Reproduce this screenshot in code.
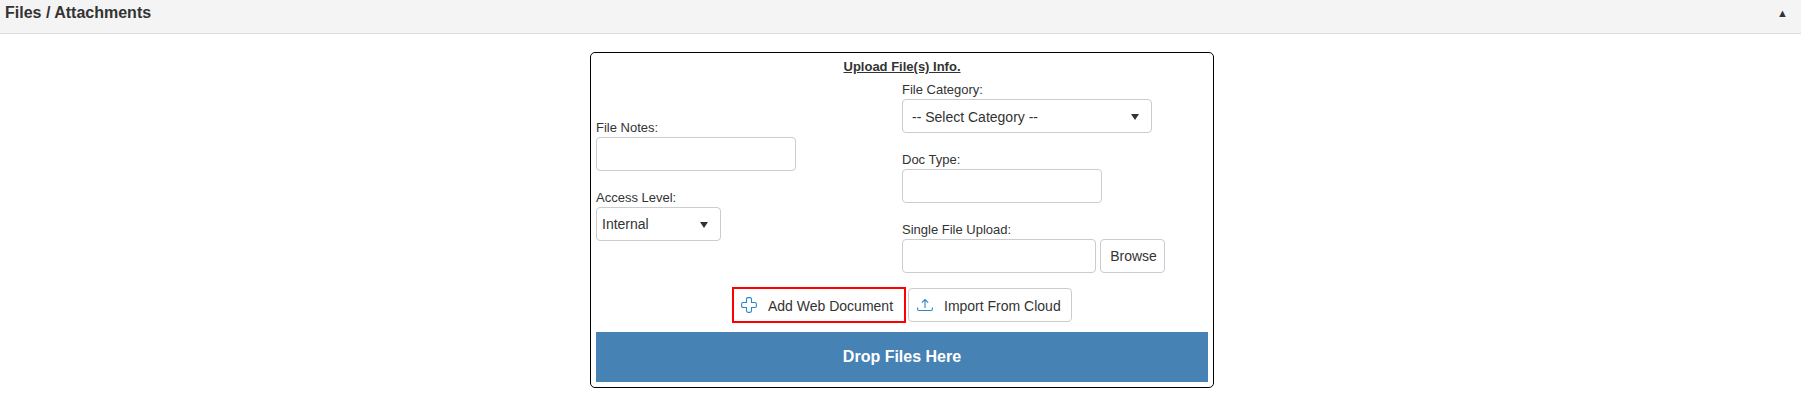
<section class="panel">
  <header class="bar">
    <h2>Files / Attachments</h2>
    <span class="toggle">▲</span>
  </header>
  <div class="body">
    <form class="box">
      <div class="title">Upload File(s) Info.</div>
      <div class="cols">
        <div class="col left">
          <div class="field">
            <label for="notes">File Notes:</label>
            <input id="notes" class="w200" type="text" />
          </div>
          <div class="field">
            <label for="access">Access Level:</label>
            <select id="access" class="w125 short">
              <option>Internal</option>
            </select>
          </div>
        </div>
        <div class="col">
          <div class="field">
            <label for="cat">File Category:</label>
            <select id="cat" class="w250">
              <option>-- Select Category --</option>
            </select>
          </div>
          <div class="field">
            <label for="doc">Doc Type:</label>
            <input id="doc" class="w200" type="text" />
          </div>
          <div class="field">
            <label for="file">Single File Upload:</label>
            <div class="filerow">
              <input id="file" class="w194" type="text" />
              <button type="button" class="btn browse">Browse</button>
            </div>
          </div>
        </div>
      </div>
      <div class="actions">
        <button type="button" class="btn action focused">
          <svg width="16" height="16" viewBox="0 0 16 16" fill="none" stroke="#2a86c8" stroke-width="1.1">
            <path d="M5.500 2.200q0-1.600 1.600-1.600h1.800q1.600 0 1.600 1.600v3.300h3.300q1.600 0 1.600 1.600v1.800q0 1.600-1.600 1.600h-3.300v3.300q0 1.600-1.600 1.600H7.100q-1.600 0-1.600-1.600v-3.300H2.200q-1.600 0-1.600-1.600V7.100q0-1.600 1.600-1.600h3.300z" />
          </svg>
          <span>Add Web Document</span>
        </button>
        <button type="button" class="btn action">
          <svg width="16" height="16" viewBox="0 0 16 16" fill="none" stroke="#2a86c8" stroke-width="1.1">
            <path d="M.6 10.500v1.500q0 1.500 1.500 1.500h11.800q1.500 0 1.500-1.500v-1.500" />
            <path d="M8 11V2.500M4.800 5.700L8 2.500l3.200 3.200" />
          </svg>
          <span>Import From Cloud</span>
        </button>
      </div>
      <div class="drop">Drop Files Here</div>
    </form>
  </div>
</section>

<style>
  :global(body) {
    margin: 0;
    background: #fff;
  }
  .panel {
    font-family: "Liberation Sans", Arial, sans-serif;
    color: #333;
  }
  .bar {
    box-sizing: content-box;
    display: flex;
    justify-content: space-between;
    align-items: center;
    height: 26px;
    padding: 0 13px 7px 5px;
    background: #f4f4f4;
    border-bottom: 1px solid #ddd;
  }
  h2 {
    margin: 0;
    font-size: 16px;
    font-weight: 700;
    color: #333;
  }
  .toggle {
    font-size: 11px;
    color: #333;
  }
  .body {
    display: flex;
    justify-content: center;
    padding-top: 18px;
    padding-left: 3px;
  }
  .box {
    box-sizing: border-box;
    width: 624px;
    height: 336px;
    border: 1px solid #000;
    border-radius: 5px;
    padding: 0 5px 5px;
    display: flex;
    flex-direction: column;
  }
  .title {
    text-align: center;
    font-size: 13px;
    font-weight: 700;
    text-decoration: underline;
    line-height: 15px;
    margin-top: 6px;
  }
  .cols {
    display: grid;
    grid-template-columns: 1fr 1fr;
    align-items: center;
    margin-top: 5px;
  }
  .col {
    display: flex;
    flex-direction: column;
    gap: 16px;
  }
  .col.left {
    padding-top: 6px;
  }
  .field {
    display: flex;
    flex-direction: column;
    align-items: flex-start;
  }
  label {
    font-size: 13px;
    line-height: 19px;
    padding-top: 1px;
    color: #333;
  }
  input,
  select,
  .btn {
    box-sizing: border-box;
    height: 34px;
    border: 1px solid #ccc;
    border-radius: 4px;
    background: #fff;
    font-family: inherit;
    font-size: 14px;
    color: #333;
  }
  input {
    padding: 0 5px;
  }
  select {
    appearance: none;
    padding: 1px 9px 0;
    background-image: url("data:image/svg+xml,%3Csvg xmlns='http://www.w3.org/2000/svg' width='8' height='6'%3E%3Cpath d='M0 0h8L4 6z' fill='%23333'/%3E%3C/svg%3E");
    background-size: 8px 6px;
    background-repeat: no-repeat;
    background-position: right 12px top 14px;
  }
  select.short {
    padding: 0 5px;
  }
  .w200 { width: 200px; }
  .w125 { width: 125px; }
  .w250 { width: 250px; }
  .w194 { width: 194px; }
  .filerow {
    display: flex;
    gap: 4px;
  }
  .btn {
    padding: 0;
  }
  .browse {
    width: 65px;
    padding-left: 2px;
  }
  .actions {
    display: flex;
    justify-content: center;
    align-items: center;
    gap: 2px;
    margin-top: 14px;
  }
  .action {
    display: flex;
    align-items: center;
    gap: 11px;
    width: 164px;
    padding-left: 8px;
  }
  .action span {
    padding-top: 2px;
  }
  .focused {
    width: 174px;
    height: 36px;
    border: 2px solid #f00;
    border-radius: 0;
    padding-left: 7px;
  }
  .drop {
    margin-top: 9px;
    height: 50px;
    line-height: 50px;
    background: #4682b4;
    color: #fff;
    text-align: center;
    font-size: 16px;
    font-weight: 700;
  }
</style>
